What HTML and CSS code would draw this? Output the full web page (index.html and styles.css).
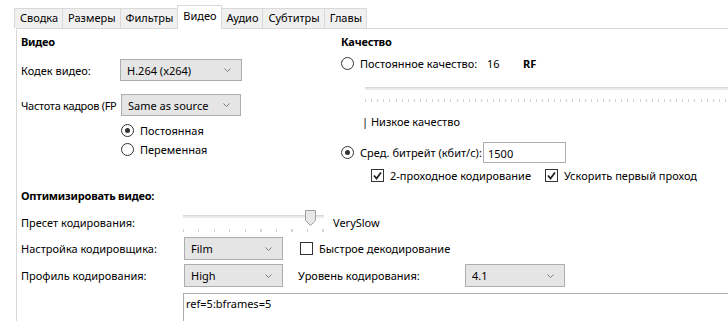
FILE: index.html
```html
<!DOCTYPE html>
<html lang="ru">
<head>
  <meta charset="UTF-8">
  <meta name="viewport" content="width=device-width, initial-scale=1.0">
  <link rel="stylesheet" href="styles.css">
</head>
<body>
  <!-- вкладки -->
  <div class="tabs">
    <div class="tab">Сводка</div>
    <div class="tab">Размеры</div>
    <div class="tab">Фильтры</div>
    <div class="tab active">Видео</div>
    <div class="tab">Аудио</div>
    <div class="tab">Субтитры</div>
    <div class="tab">Главы</div>
  </div>

  <div class="panel">
    <div class="top">
      <!-- видео -->
      <div class="col-video">
        <h3 class="heading">Видео</h3>
        <div class="row codec-row">
          <span class="label">Кодек видео:</span>
          <div class="combo combo-codec">
            <span>H.264 (x264)</span>
            <svg class="chev" width="7" height="4" viewBox="0 0 7 4"><polyline points="0.5,0.5 3.5,3.5 6.5,0.5" fill="none" stroke="#7a7a7a" stroke-width="1"/></svg>
          </div>
        </div>
        <div class="row fps-row">
          <span class="label fps-label">Частота кадров (FP</span>
          <div class="combo combo-fps">
            <span>Same as source</span>
            <svg class="chev" width="7" height="4" viewBox="0 0 7 4"><polyline points="0.5,0.5 3.5,3.5 6.5,0.5" fill="none" stroke="#7a7a7a" stroke-width="1"/></svg>
          </div>
        </div>
        <div class="fps-modes">
          <div class="opt"><span class="radio on"></span><span>Постоянная</span></div>
          <div class="opt"><span class="radio"></span><span>Переменная</span></div>
        </div>
      </div>

      <!-- качество -->
      <div class="col-quality">
        <h3 class="heading">Качество</h3>
        <div class="opt rf-row">
          <span class="radio"></span>
          <span class="rf-label">Постоянное качество:</span>
          <span class="rf-value">16</span>
          <span class="rf-unit">RF</span>
        </div>
        <div class="q-slider">
          <div class="track"></div>
          <div class="ticks"></div>
        </div>
        <div class="q-hint">| Низкое качество</div>
        <div class="opt bitrate-row">
          <span class="radio on"></span>
          <span class="br-label">Сред. битрейт (кбит/с):</span>
          <div class="textbox">1500</div>
        </div>
        <div class="checks">
          <div class="opt check-first">
            <span class="checkbox on"><svg width="11" height="11" viewBox="0 0 11 11"><polyline points="2,5.5 4.5,8.5 9,2.5" fill="none" stroke="#222" stroke-width="1.8"/></svg></span>
            <span>2-проходное кодирование</span>
          </div>
          <div class="opt">
            <span class="checkbox on"><svg width="11" height="11" viewBox="0 0 11 11"><polyline points="2,5.5 4.5,8.5 9,2.5" fill="none" stroke="#222" stroke-width="1.8"/></svg></span>
            <span>Ускорить первый проход</span>
          </div>
        </div>
      </div>
    </div>

    <!-- оптимизация -->
    <div class="optimize">
      <h3 class="heading">Оптимизировать видео:</h3>
      <div class="row preset-row">
        <span class="label-wide">Пресет кодирования:</span>
        <div class="p-slider">
          <div class="track"></div>
          <div class="ticks"></div>
          <svg class="thumb" width="11" height="16" viewBox="0 0 11 16"><path d="M0.5,0.5 H10.5 V10.5 L5.5,15.5 L0.5,10.5 Z" fill="#e8e8e8" stroke="#a0a0a0"/></svg>
        </div>
        <span class="preset-name">VerySlow</span>
      </div>
      <div class="row tune-row">
        <span class="label-wide">Настройка кодировщика:</span>
        <div class="combo combo-small">
          <span>Film</span>
          <svg class="chev" width="7" height="4" viewBox="0 0 7 4"><polyline points="0.5,0.5 3.5,3.5 6.5,0.5" fill="none" stroke="#7a7a7a" stroke-width="1"/></svg>
        </div>
        <div class="opt fast-decode">
          <span class="checkbox"></span>
          <span>Быстрое декодирование</span>
        </div>
      </div>
      <div class="row profile-row">
        <span class="label-wide">Профиль кодирования:</span>
        <div class="combo combo-small">
          <span>High</span>
          <svg class="chev" width="7" height="4" viewBox="0 0 7 4"><polyline points="0.5,0.5 3.5,3.5 6.5,0.5" fill="none" stroke="#7a7a7a" stroke-width="1"/></svg>
        </div>
        <span class="level-label">Уровень кодирования:</span>
        <div class="combo combo-level">
          <span>4.1</span>
          <svg class="chev" width="7" height="4" viewBox="0 0 7 4"><polyline points="0.5,0.5 3.5,3.5 6.5,0.5" fill="none" stroke="#7a7a7a" stroke-width="1"/></svg>
        </div>
      </div>
      <textarea class="options" readonly>ref=5:bframes=5</textarea>
    </div>
  </div>
</body>
</html>
```

FILE: styles.css
```css
/* база */
* {
  box-sizing: border-box;
}

body {
  margin: 0;
  width: 728px;
  height: 321px;
  overflow: hidden;
  background: #fff;
  color: #000;
  font-family: "Noto Sans", "Open Sans", sans-serif;
  font-size: 11px;
}

/* вкладки */
.tabs {
  display: flex;
  align-items: flex-end;
  height: 28px;
  padding-left: 14px;
}

.tab {
  height: 20px;
  line-height: 18px;
  padding: 0 4px 0 5px;
  margin-right: -1px;
  border: 1px solid #d9d9d9;
  border-bottom: none;
  background: #f0f0f0;
  white-space: nowrap;
}

.tab.active {
  position: relative;
  z-index: 1;
  height: 24px;
  line-height: 20px;
  margin-bottom: -1px;
  background: #fff;
}

/* панель */
.panel {
  margin-left: 16px;
  padding: 5px 0 0 4px;
  border-left: 1px solid #d9d9d9;
  border-top: 1px solid #d9d9d9;
  height: 400px;
}

.heading {
  margin: 0;
  font-size: 11px;
  font-weight: 700;
  line-height: 16px;
  letter-spacing: -0.2px;
}

.top {
  display: grid;
  grid-template-columns: 320px 1fr;
}

.row {
  display: flex;
  align-items: center;
}

.opt {
  display: flex;
  align-items: center;
  gap: 6px;
  white-space: nowrap;
}

/* левая колонка */
.label {
  width: 99px;
  flex: none;
  white-space: nowrap;
}

.fps-label {
  width: 100px;
  letter-spacing: -0.3px;
}

.codec-row {
  margin-top: 9px;
  height: 22px;
}

.fps-row {
  margin-top: 13px;
  height: 22px;
}

.fps-modes {
  margin-top: 5px;
  padding-left: 100px;
}

.fps-modes .opt {
  height: 19px;
}

/* выпадающие списки */
.combo {
  display: flex;
  align-items: center;
  justify-content: space-between;
  height: 22px;
  padding: 0 10px 0 6px;
  border: 1px solid #adadad;
  background: #e5e5e5;
  white-space: nowrap;
}

.combo-codec {
  width: 122px;
}

.combo-fps {
  width: 120px;
}

.combo-small {
  width: 99px;
  height: 23px;
}

.combo-level {
  width: 100px;
  height: 23px;
}

/* переключатели и флажки */
.radio {
  flex: none;
  display: flex;
  align-items: center;
  justify-content: center;
  width: 13px;
  height: 13px;
  border: 1px solid #333;
  border-radius: 50%;
  background: #fff;
}

.radio.on::after {
  content: "";
  width: 5px;
  height: 5px;
  border-radius: 50%;
  background: #333;
}

.checkbox {
  flex: none;
  display: flex;
  align-items: center;
  justify-content: center;
  width: 13px;
  height: 13px;
  border: 1px solid #333;
  background: #fff;
}

/* правая колонка */
.rf-row {
  margin-top: 4px;
  height: 18px;
  gap: 0;
}

.rf-row .radio {
  margin-right: 6px;
}

.rf-label {
  width: 127px;
}

.rf-value {
  width: 36px;
}

.rf-unit {
  font-weight: 700;
}

.q-slider {
  margin-left: 24px;
  padding-top: 15px;
}

.track {
  height: 3px;
  border-top: 1px solid #d9d9d9;
  background: #e9e9e9;
}

.q-slider .ticks {
  margin-top: 9px;
  height: 3px;
  background: repeating-linear-gradient(to right, #d2d2d2 0 1px, transparent 1px 6.1px);
}

.q-hint {
  margin: 11px 0 0 21px;
  line-height: 18px;
}

.bitrate-row {
  margin-top: 11px;
  height: 21px;
  gap: 0;
}

.bitrate-row .radio {
  margin-right: 6px;
}

.br-label {
  width: 123px;
}

.textbox {
  width: 83px;
  height: 21px;
  padding: 3px 0 0 4px;
  border: 1px solid #adadad;
  background: #fff;
}

.checks {
  display: flex;
  margin: 5px 0 0 30px;
  height: 15px;
}

.check-first {
  width: 174px;
}

/* оптимизация */
.optimize {
  margin-top: 5px;
}

.label-wide {
  width: 162px;
  flex: none;
  white-space: nowrap;
}

.preset-row {
  margin-top: 7px;
  height: 22px;
}

.p-slider {
  position: relative;
  width: 141px;
  height: 22px;
  padding-top: 4px;
}

.p-slider .ticks {
  margin-top: 11px;
  height: 3px;
  background: repeating-linear-gradient(to right, #d2d2d2 0 1px, transparent 1px 15.5px);
}

.thumb {
  position: absolute;
  left: 122px;
  top: -1px;
}

.preset-name {
  margin-left: 9px;
}

.tune-row {
  margin-top: 4px;
  height: 23px;
}

.tune-row .combo {
  margin-left: 1px;
}

.fast-decode {
  margin-left: 17px;
}

.profile-row {
  margin-top: 4px;
  height: 23px;
}

.profile-row .combo-small {
  margin-left: 1px;
}

.level-label {
  width: 167px;
  margin-left: 15px;
}

.options {
  display: block;
  width: 560px;
  height: 40px;
  margin: 6px 0 0 162px;
  padding: 2px 2px;
  border: 1px solid #ababab;
  font-family: "Noto Sans", "Open Sans", sans-serif;
  font-size: 11px;
  line-height: 15px;
  color: #000;
  resize: none;
  outline: none;
}
```
